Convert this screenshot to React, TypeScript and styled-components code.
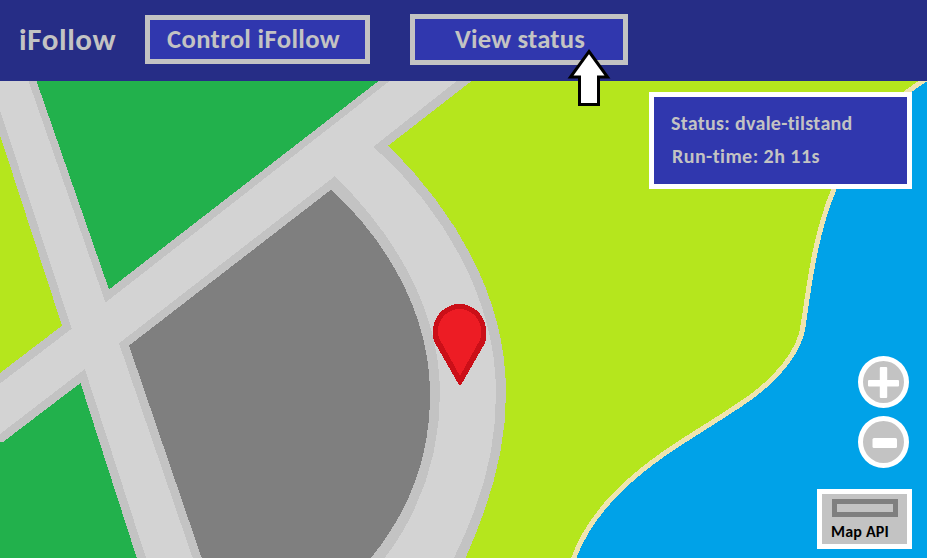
import React from 'react';
import styled, { createGlobalStyle } from 'styled-components';

const GlobalStyle = createGlobalStyle`
  *, *::before, *::after { box-sizing: border-box; }
  body { margin: 0; }
`;

const Page = styled.div`
  display: flex;
  flex-direction: column;
  width: 927px;
  height: 558px;
  overflow: hidden;
  position: relative;
  font-family: Carlito, Calibri, Lato, "Open Sans", sans-serif;
  font-weight: 700;
  font-variant-ligatures: none;
`;

const Header = styled.header`
  flex: none;
  display: flex;
  align-items: center;
  height: 81px;
  padding-left: 19px;
  background: #262d86;
  color: #c3c3c3;
`;

const Brand = styled.h1`
  width: 126px;
  margin: 0 0 4px;
  font-size: 31px;
  line-height: 34px;
  letter-spacing: 0.6px;
  white-space: nowrap;
`;

const NavButton = styled.button<{ $width: number; $height: number; $gap?: number; $indent: number; $spacing: number }>`
  width: ${(p) => p.$width}px;
  height: ${(p) => p.$height}px;
  margin: 0 0 2px ${(p) => p.$gap ?? 0}px;
  padding: 0 0 2px ${(p) => p.$indent}px;
  border: 5px solid #c3c3c3;
  background: #3037ae;
  color: #c3c3c3;
  font: inherit;
  font-variant-ligatures: none;
  font-size: 26.67px;
  line-height: 30px;
  letter-spacing: ${(p) => p.$spacing}px;
  text-align: left;
  white-space: nowrap;
`;

const MapArea = styled.main`
  position: relative;
  flex: 1;
  min-height: 0;
`;

const MapCanvas = styled.svg`
  display: block;
  width: 927px;
  height: 477px;
`;

const StatusPanel = styled.section`
  position: absolute;
  top: 11px;
  right: 15px;
  width: 263px;
  height: 97px;
  padding: 10px 0 0 17px;
  border: 5px solid #fff;
  background: #3037ae;
  color: #c3c3c3;
`;

const StatusLine = styled.p<{ $indent?: number; $spacing: number }>`
  margin: 0;
  padding-left: ${(p) => p.$indent ?? 0}px;
  font-size: 20px;
  line-height: 33px;
  letter-spacing: ${(p) => p.$spacing}px;
  white-space: nowrap;
`;

const ZoomControls = styled.div`
  position: absolute;
  top: 275px;
  right: 18px;
  display: flex;
  flex-direction: column;
  gap: 8px;
`;

const ZoomButton = styled.button`
  width: 51px;
  height: 52px;
  padding: 0;
  border: 5px solid #fff;
  border-radius: 50%;
  background: #c3c3c3;

  svg { display: block; width: 41px; height: 42px; }
`;

const MapApiCard = styled.div`
  position: absolute;
  top: 408px;
  right: 15px;
  width: 95px;
  height: 60px;
  padding: 5px 0 0 9px;
  border: 5px solid #fff;
  background: #c3c3c3;
  color: #000;
  font-size: 16px;
  line-height: 18px;
  letter-spacing: 0.2px;
  white-space: nowrap;
`;

const ScaleBar = styled.div`
  width: 66px;
  height: 18px;
  margin: 0 0 6px 1px;
  border: 5px solid #7f7f7f;
`;

const Pointer = styled.svg`
  position: absolute;
  left: 566px;
  top: 47px;
  width: 46px;
  height: 60px;
`;

function CityMap() {
  return (
    <MapCanvas viewBox="0 81 927 477" shapeRendering="crispEdges">
      <rect y="81" width="927" height="477" fill="#d3d3d3" />
      <g fill="#c3c3c3">
        <path d="M28.5 81L105.5 302.5L389.5 81Z" />
        <path d="M0 110L71.7 328.7L0 383.5Z" />
        <path d="M0 434L84.8 369L146 558H0Z" />
        <path d="M119 343.3L334.7 176.3C399 238 440 315 440 393C440 450 423 508 384.7 558H192.7Z" />
        <path d="M456.7 81L373.5 146.7C450 215 496 305 496 393C496 450 483 498 454 558H927V81Z" />
      </g>
      <g fill="#22b14c">
        <path d="M36.5 81L109 289.5L378.5 81Z" />
        <path d="M0 442H3L80.5 383L136.8 558H0Z" />
      </g>
      <path fill="#7f7f7f" d="M129 345.6L331 189.7C390 243 430 318 430 393C430 450 415 503 371 558H201.7Z" />
      <g fill="#b5e61d">
        <path d="M0 135L62 325.7L0 373Z" />
        <path d="M471.5 81L388.5 145.5C464 221 506 305 506 393C506 450 490 503 465.5 558H927V81Z" />
      </g>
      <path
        fill="#00a2e8"
        d="M923 81C870 115 845 155 834 189C817 230 812 280 803.5 323C799 352 775 380 746.7 400C700 432 663 450 626 484C602 506 583 532 573 560H930V81Z"
      />
      <path
        fill="none"
        stroke="#efe4b0"
        strokeWidth="5"
        d="M930 76L923 81C870 115 845 155 834 189C815 235 810 280 803.5 323C801 352 775 380 746.7 400C700 432 663 450 626 484C602 506 583 532 573 560"
      />
      <path fill="#cb0f18" d="M459 385H461L484.5 344L486 340V331A26.5 27 0 0 0 433 331V337L434.5 342Z" />
      <path fill="#ed1c24" d="M460 376L480 340L481 336V331A21.5 22 0 0 0 438 331V335L439.5 339Z" />
    </MapCanvas>
  );
}

export default function App() {
  return (
    <>
      <GlobalStyle />
      <Page>
        <Header>
          <Brand>iFollow</Brand>
          <NavButton $width={225} $height={49} $indent={17} $spacing={0.35}>Control iFollow</NavButton>
          <NavButton $width={218} $height={51} $gap={40} $indent={40} $spacing={0.2}>View status</NavButton>
        </Header>
        <MapArea>
          <CityMap />
          <StatusPanel>
            <StatusLine $spacing={0.3}>Status: dvale-tilstand</StatusLine>
            <StatusLine $indent={1} $spacing={0.45}>Run-time: 2h 11s</StatusLine>
          </StatusPanel>
          <ZoomControls>
            <ZoomButton aria-label="Zoom in">
              <svg viewBox="0 0 41 42" fill="#fff">
                <rect x="5" y="19" width="31" height="6.5" rx="1" />
                <rect x="16.8" y="6" width="7.4" height="31" rx="1" />
              </svg>
            </ZoomButton>
            <ZoomButton aria-label="Zoom out">
              <svg viewBox="0 0 41 42" fill="#fff">
                <rect x="9.5" y="17" width="24.5" height="10" rx="1.5" />
              </svg>
            </ZoomButton>
          </ZoomControls>
          <MapApiCard>
            <ScaleBar />
            Map API
          </MapApiCard>
        </MapArea>
        <Pointer viewBox="566 47 46 60">
          <path
            d="M589 51.5L607.5 77H598.5V104.5H579.5V77H570.5Z"
            fill="#fff"
            stroke="#000"
            strokeWidth="3"
          />
        </Pointer>
      </Page>
    </>
  );
}
